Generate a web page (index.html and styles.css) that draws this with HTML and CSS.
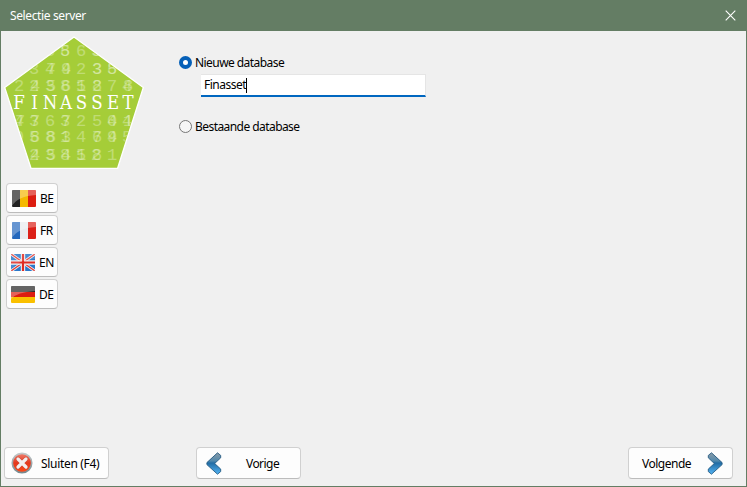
FILE: index.html
```html
<!DOCTYPE html>
<html lang="nl">
<head>
<meta charset="utf-8">
<title>Selectie server</title>
<link rel="stylesheet" href="styles.css">
</head>
<body>
<div class="window">
  <header class="titlebar">
    <span class="title">Selectie server</span>
    <svg class="close" width="11" height="11" viewBox="0 0 11 11"><path d="M.7.7l9.6 9.6M10.3.7L.7 10.3" stroke="#fff" stroke-width="1.1"/></svg>
  </header>
  <main class="content">
    <aside class="side">
      <svg class="logo" width="145" height="140" viewBox="1 31 145 140">
        <defs><clipPath id="penta"><path d="M74 37.5L142.5 88 117 167.5H31.5L5.5 87.5z"/></clipPath></defs>
        <path d="M74 37L143.3 87.5 117.6 168.3H31L4.7 87.4z" fill="#a5cd39" stroke="#fff" stroke-width="1.3"/>
        <g class="digits" clip-path="url(#penta)">
          <text y="56" x="45 60 76 91">5865</text><text y="56" x="60 92">53</text>
          <text y="74" x="29 45 61 76 92 107">344238</text><text y="74" x="46 61 92 107">7935</text>
          <text y="91" x="14 29 45 60 76 92 107 122">22381274</text><text y="91" x="30 46 61 76 92 123">456588</text>
          <text y="126" x="14 29 45 60 76 92 107 122">43632504</text><text y="126" x="15 30 61 107 123">77741</text>
          <text y="142" x="14 29 45 60 76 92 107 122">95814745</text><text y="142" x="30 46 61 92 107">88369</text>
          <text y="160" x="29 45 60 76 91 107">238121</text><text y="160" x="30 46 61 76 92">45458</text>
        </g>
        <g class="brand"><text x="19">F</text><text x="34.5">I</text><text x="50">N</text><text x="66">A</text><text x="81.5">S</text><text x="97">S</text><text x="113">E</text><text x="128">T</text></g>
      </svg>
      <nav class="languages">
        <button class="btn lang"><svg class="flag" width="24" height="17" viewBox="0 0 24 17"><path fill="#222" d="M0 0h8v17H0z"/><path fill="#f5b800" d="M8 0h8v17H8z"/><path fill="#dc1c10" d="M16 0h8v17h-8z"/><path class="shine" d="M0 0h24v5Q6 6 0 16z"/></svg><span>BE</span></button>
        <button class="btn lang"><svg class="flag" width="24" height="17" viewBox="0 0 24 17"><path fill="#2468bd" d="M0 0h8v17H0z"/><path fill="#e9ebee" d="M8 0h8v17H8z"/><path fill="#dc2018" d="M16 0h8v17h-8z"/><path class="shine" d="M0 0h24v5Q6 6 0 16z"/></svg><span>FR</span></button>
        <button class="btn lang en"><svg class="flag" width="24" height="17" viewBox="0 0 24 17"><path fill="#2b78c9" d="M0 0h24v17H0z"/><path stroke="#e8edf4" stroke-width="3" d="M0 0l24 17M24 0L0 17"/><path stroke="#e63b32" stroke-width="1.3" d="M0 0l24 17M24 0L0 17"/><path stroke="#f1f2f5" stroke-width="4.4" d="M12 0v17M0 8.5h24"/><path stroke="#e02b22" stroke-width="2.2" d="M12 0v17M0 8.5h24"/><path class="shine soft" d="M0 0h24v5Q6 6 0 16z"/></svg><span>EN</span></button>
        <button class="btn lang en"><svg class="flag" width="24" height="17" viewBox="0 0 24 17"><path fill="#222" d="M0 0h24v6H0z"/><path fill="#dc1c10" d="M0 6h24v5H0z"/><path fill="#fac000" d="M0 11h24v6H0z"/><path class="shine" d="M0 0h24v5Q6 6 0 13z"/></svg><span>DE</span></button>
      </nav>
    </aside>
    <section class="form">
      <div class="option"><i class="radio checked"></i><span class="label">Nieuwe database</span></div>
      <div class="field"><span>Finasset</span><i class="caret"></i></div>
      <div class="option"><i class="radio"></i><span class="label">Bestaande database</span></div>
    </section>
  </main>
  <footer class="actions">
    <button class="btn action quit">
      <svg width="22" height="22" viewBox="0 0 22 22"><defs><linearGradient id="red" x2="0" y2="1"><stop stop-color="#ef8070"/><stop offset=".5" stop-color="#e5371b"/><stop offset="1" stop-color="#ff4a16"/></linearGradient><linearGradient id="rim" x2="0" y2="1"><stop stop-color="#c3c7c8"/><stop offset="1" stop-color="#76898f"/></linearGradient></defs><circle cx="11" cy="11" r="9.7" fill="url(#red)" stroke="url(#rim)" stroke-width="1.7"/><path d="M7 7l8 8M15 7l-8 8" stroke="#c8402e" stroke-width="4.2" stroke-linecap="round"/><path d="M7 7l8 8M15 7l-8 8" stroke="#f4eeee" stroke-width="3.3" stroke-linecap="round"/></svg>
      <span>Sluiten (F4)</span>
    </button>
    <button class="btn action prev">
      <svg width="16" height="23" viewBox="0 0 16 23"><defs><linearGradient id="blue" x2="0" y2="1"><stop stop-color="#8b9ba7"/><stop offset=".38" stop-color="#5189ad"/><stop offset=".48" stop-color="#216ca5"/><stop offset="1" stop-color="#54b5f5"/></linearGradient></defs><path d="M11.5.8l3.2 2.6v2.4L8.7 11.5l6 5.6v2.5l-3.2 2.6L.9 12.6v-2z" fill="url(#blue)" stroke="#255b83" stroke-width=".9"/></svg>
      <span>Vorige</span>
    </button>
    <button class="btn action next">
      <span>Volgende</span>
      <svg width="16" height="23" viewBox="0 0 16 23"><path d="M4.5.8L1.3 3.4v2.4l6 5.7-6 5.6v2.5l3.2 2.6L15.1 12.6v-2z" fill="url(#blue)" stroke="#255b83" stroke-width=".9"/></svg>
    </button>
  </footer>
</div>
</body>
</html>
```
FILE: styles.css
```css
* { box-sizing: border-box; }
body { margin: 0; font: 12px/16px "Noto Sans", "Open Sans", sans-serif; color: #000; }
.window { width: 747px; height: 487px; display: flex; flex-direction: column; background: #f0f0f0; border: solid #647d64; border-width: 0 1px 1px; }
.titlebar { height: 31px; flex: none; display: flex; align-items: center; justify-content: space-between; padding: 0 10px 0 9px; background: #647d64; color: #fff; }
.title { letter-spacing: -.38px; }
.content { flex: 1; display: flex; }
.side { width: 178px; }
.logo { display: block; }
.digits text { font: 17px "Liberation Mono", monospace; fill: #fff; opacity: .3; }
.brand text { font: 18.5px "DejaVu Serif Condensed", "DejaVu Serif", serif; font-stretch: condensed; fill: #fff; text-anchor: middle; transform: translateY(109px); }
.languages { display: flex; flex-direction: column; gap: 2px; padding: 12px 0 0 5px; }
.btn { font: inherit; color: inherit; background: #fdfdfd; border: 1px solid #d0d0d0; border-bottom-color: #bcbcbc; border-radius: 4px; display: flex; align-items: center; padding: 0; white-space: nowrap; }
.btn span { padding-top: 1px; }
.lang { width: 52px; height: 30px; padding-left: 5px; gap: 4px; letter-spacing: -.5px; }
.lang span { padding-top: 2px; }
.lang.en { padding-left: 4px; }
.flag { border-radius: 1px; flex: none; }
.shine { fill: #fff; opacity: .3; }
.soft { opacity: .15; }
.form { padding-top: 24px; }
.option { display: flex; align-items: center; gap: 3px; height: 16px; }
.radio { width: 13px; height: 13px; margin-top: -1px; border: 1px solid #777; border-radius: 50%; background: #f6f6f6; }
.radio.checked { border: 4px solid #0560b8; background: #fff; }
.label { letter-spacing: -.56px; }
.field { width: 225px; height: 23px; margin: 3px 0 22px 22px; padding: 0 0 0 3px; display: flex; align-items: center; background: #fff; border: solid #e5e5e5; border-width: 1px 1px 2px 0; border-bottom-color: #0067c0; letter-spacing: -.5px; }
.caret { width: 1px; height: 15px; background: #000; }
.actions { display: flex; height: 39px; flex: none; padding: 0 13px 0 3px; align-items: flex-start; }
.action { width: 105px; height: 32px; }
.quit { padding-left: 6px; gap: 8px; letter-spacing: -.32px; }
.prev { margin-left: 87px; padding-left: 9px; gap: 24px; letter-spacing: -.55px; }
.next { margin-left: auto; padding-left: 13px; letter-spacing: -.5px; }
.next svg { margin-left: auto; margin-right: 9px; }
```
